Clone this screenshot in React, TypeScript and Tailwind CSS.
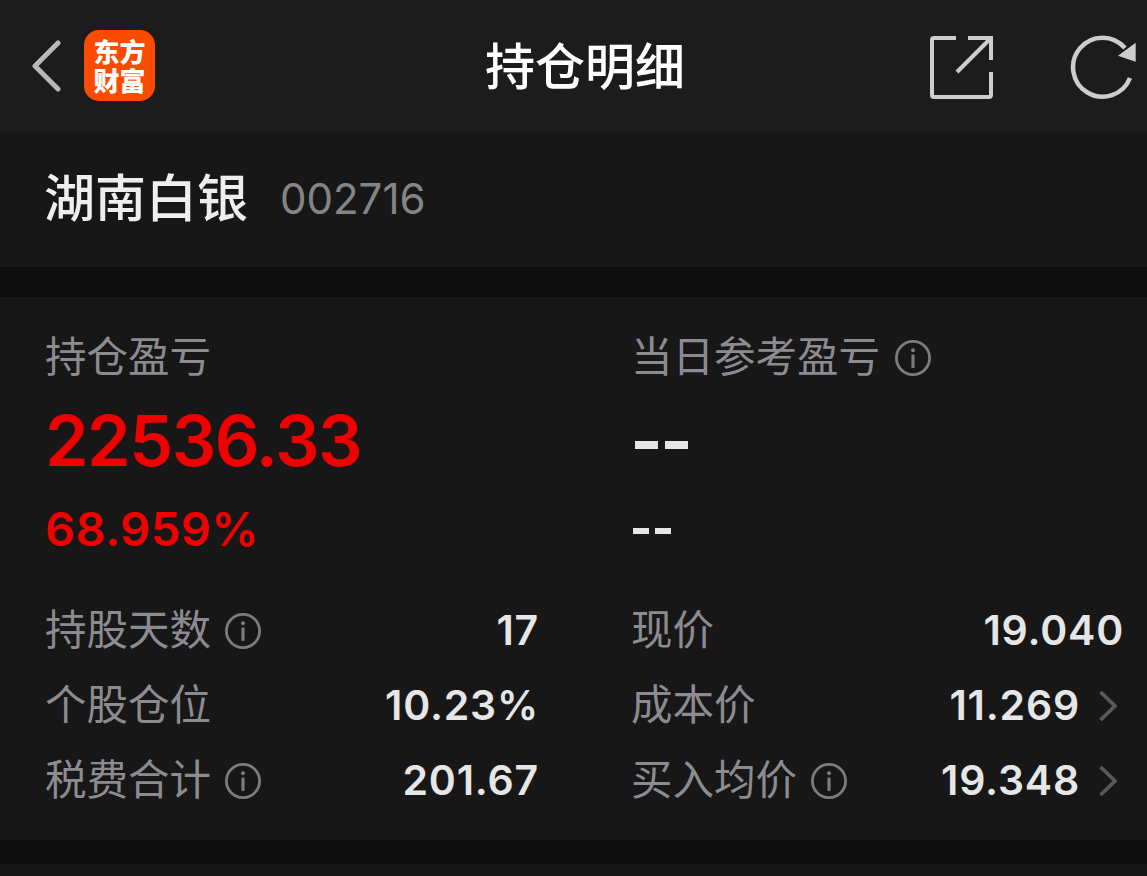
import React from "react";

function Info() {
  return (
    <svg width="36" height="36" viewBox="0 0 36 36" fill="none" className="shrink-0">
      <circle cx="18" cy="18" r="16.6" stroke="#7c7c7c" strokeWidth="2.8" />
      <circle cx="18" cy="10.2" r="2" fill="#7c7c7c" />
      <rect x="16.4" y="14.5" width="3.2" height="13.5" rx="1" fill="#7c7c7c" />
    </svg>
  );
}

function Chevron() {
  return (
    <svg width="18" height="32" viewBox="0 0 18 32" fill="none" className="shrink-0">
      <path d="M1.5 2 L16 16 L1.5 30" stroke="#595959" strokeWidth="3.8" />
    </svg>
  );
}

function Row({ label, value, info, chevron }: { label: string; value: string; info?: boolean; chevron?: boolean }) {
  return (
    <div className="flex h-[75px] items-center">
      <span className="mt-[1px] text-[41.5px] leading-none text-[#8c8c90]">{label}</span>
      {info && <span className="ml-[14px] flex"><Info /></span>}
      <span className="ml-auto text-[41px] leading-none font-semibold tracking-[0.8px] text-[#e6e6e6]">{value}</span>
      {chevron && <span className="mr-[7px] ml-[19px] flex"><Chevron /></span>}
    </div>
  );
}

export default function App() {
  return (
    <div className="h-[876px] w-[1147px] overflow-hidden bg-[#0e0e0e] font-['Inter','Noto_Sans_CJK_SC',sans-serif]">
      <header className="flex h-[132px] items-center bg-[#1c1c1c] pl-[31px] pr-[11px]">
        <svg width="30" height="52" viewBox="0 0 30 52" fill="none" className="shrink-0">
          <path d="M27 3 L4 26 L27 49" stroke="#b8b8b8" strokeWidth="5" strokeLinecap="round" strokeLinejoin="round" />
        </svg>
        <div className="mt-[-2px] ml-[23px] flex h-[71px] w-[71px] items-center justify-center rounded-[15px] bg-[#fb4b00]">
          <span className="w-[53px] text-center font-['Noto_Sans_CJK_SC',sans-serif] text-[26px] leading-[29px] font-black text-white">东方财富</span>
        </div>
        <h1 className="mt-[2px] ml-[330px] w-[200px] text-center text-[50px] leading-none font-medium whitespace-nowrap text-white">持仓明细</h1>
        <svg width="64" height="64" viewBox="0 0 64 64" fill="none" className="mt-[4px] ml-[245px] shrink-0">
          <path d="M26 2 H4 a2 2 0 0 0 -2 2 V59 a2 2 0 0 0 2 2 H59 a2 2 0 0 0 2 -2 V36" stroke="#cdcdcd" strokeWidth="4" />
          <path d="M38 2 H61 V24" stroke="#cdcdcd" strokeWidth="4" />
          <path d="M27 36 L60 3" stroke="#cdcdcd" strokeWidth="4" />
        </svg>
        <svg width="66" height="66" viewBox="0 0 66 66" fill="none" className="mt-[4px] ml-[76px] shrink-0">
          <path d="M60 43 A29.5 29.5 0 1 1 55 13" stroke="#cdcdcd" strokeWidth="4.5" />
          <path d="M65.7 7.7 V26.7 L48 20.7 Z" fill="#cdcdcd" />
        </svg>
      </header>

      <section className="flex h-[135px] items-center bg-[#171717] pb-[2px] pl-[44px]">
        <span className="text-[51px] leading-none font-medium text-[#eeeeee]">湖南白银</span>
        <span className="ml-[32px] text-[42px] leading-none text-[#858585]">002716</span>
      </section>

      <section className="mt-[30px] grid h-[543px] grid-cols-[494px_493px] gap-x-[92px] bg-[#171717] pt-[37px] pl-[45px]">
        <div>
          <div className="flex h-[48px] items-center text-[41.5px] leading-none text-[#8c8c90]">持仓盈亏</div>
          <div className="mt-[26px] flex h-[66px] items-center text-[70px] leading-none font-semibold tracking-[-1.5px] text-[#f00000]">22536.33</div>
          <div className="mt-[29px] flex h-[50px] items-center text-[47px] leading-none font-semibold tracking-[0.5px] text-[#f00000]">68.959%</div>
          <div className="mt-[40px]">
            <Row label="持股天数" value="17" info />
            <Row label="个股仓位" value="10.23%" />
            <Row label="税费合计" value="201.67" info />
          </div>
        </div>
        <div>
          <div className="flex h-[48px] items-center text-[41.5px] leading-none text-[#8c8c90]">
            当日参考盈亏<span className="ml-[15px] flex"><Info /></span>
          </div>
          <div className="mt-[26px] ml-[4px] flex h-[66px] items-center gap-[7px] pt-[8px]">
            <span className="h-[8px] w-[23px] bg-[#e6e6e6]" />
            <span className="h-[8px] w-[23px] bg-[#e6e6e6]" />
          </div>
          <div className="mt-[29px] ml-[2px] flex h-[50px] items-center gap-[6px] pt-[6px]">
            <span className="h-[6px] w-[16px] bg-[#e6e6e6]" />
            <span className="h-[6px] w-[16px] bg-[#e6e6e6]" />
          </div>
          <div className="mt-[40px]">
            <Row label="现价" value="19.040" />
            <Row label="成本价" value="11.269" chevron />
            <Row label="买入均价" value="19.348" info chevron />
          </div>
        </div>
      </section>

      <section className="mt-[24px] h-[12px] bg-[#171717]" />
    </div>
  );
}
